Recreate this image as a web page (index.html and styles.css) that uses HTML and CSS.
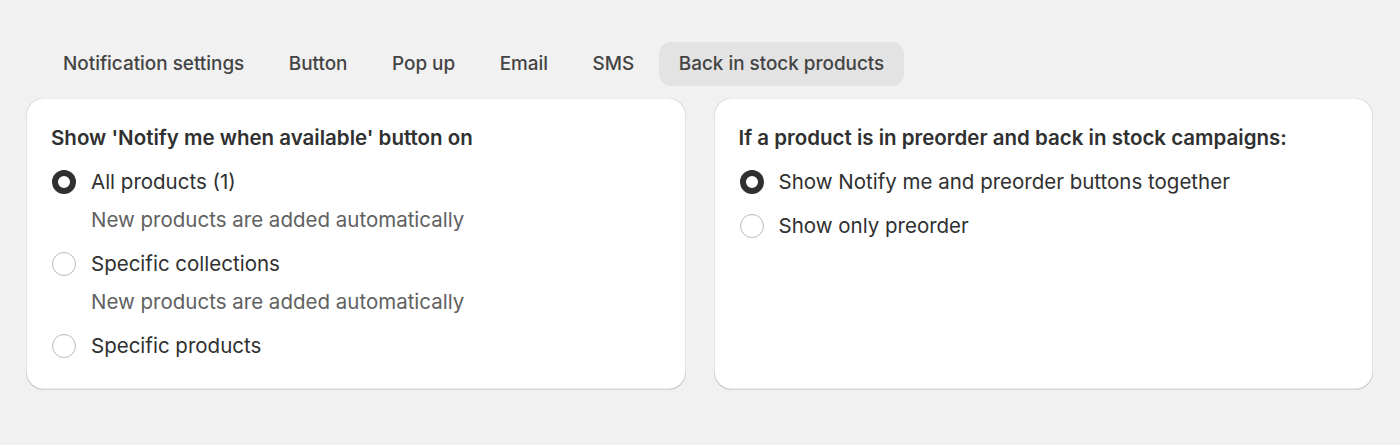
FILE: index.html
```html
<!DOCTYPE html>
<html lang="en">
<head>
<meta charset="utf-8">
<title>Back in stock settings</title>
<link rel="stylesheet" href="styles.css">
</head>
<body>
<div class="page">
  <nav class="tabs">
    <div class="tab">Notification settings</div>
    <div class="tab">Button</div>
    <div class="tab">Pop up</div>
    <div class="tab">Email</div>
    <div class="tab">SMS</div>
    <div class="tab tab-active">Back in stock products</div>
  </nav>
  <div class="cards">
    <section class="card">
      <h2 class="card-title">Show 'Notify me when available' button on</h2>
      <div class="choices">
        <div class="choice">
          <div class="choice-row"><span class="radio radio-checked"></span><span class="label">All products (1)</span></div>
          <div class="help">New products are added automatically</div>
        </div>
        <div class="choice">
          <div class="choice-row"><span class="radio"></span><span class="label">Specific collections</span></div>
          <div class="help">New products are added automatically</div>
        </div>
        <div class="choice">
          <div class="choice-row"><span class="radio"></span><span class="label">Specific products</span></div>
        </div>
      </div>
    </section>
    <section class="card">
      <h2 class="card-title">If a product is in preorder and back in stock campaigns:</h2>
      <div class="choices">
        <div class="choice">
          <div class="choice-row"><span class="radio radio-checked"></span><span class="label">Show Notify me and preorder buttons together</span></div>
        </div>
        <div class="choice">
          <div class="choice-row"><span class="radio"></span><span class="label">Show only preorder</span></div>
        </div>
      </div>
    </section>
  </div>
</div>
</body>
</html>
```
FILE: styles.css
```css
* { box-sizing: border-box; }

html, body {
  margin: 0;
  padding: 0;
}

body {
  background: #f1f1f1;
  font-family: Inter, "Noto Sans", "Liberation Sans", sans-serif;
  color: #303030;
  font-size: 20.5px;
  line-height: 30px;
}

.page {
  padding: 42px 27px 0 26px;
}

.tabs {
  display: flex;
  gap: 4.5px;
  padding-left: 17px;
}

.tab {
  height: 44px;
  line-height: 44px;
  padding: 0 20px;
  border-radius: 12px;
  font-size: 18.9px;
  font-weight: 500;
  color: #444444;
  white-space: nowrap;
}

.tab-active {
  background: #e3e3e3;
}

.cards {
  margin-top: 12px;
  display: grid;
  grid-template-columns: 1fr 1fr;
  gap: 28px;
}

.card {
  background: #ffffff;
  border-radius: 18px;
  height: 292px;
  padding: 24.5px 25px 24px;
  box-shadow:
    inset 1px 0 0 rgba(0, 0, 0, 0.11),
    inset -1px 0 0 rgba(0, 0, 0, 0.11),
    inset 0 1px 0 rgba(0, 0, 0, 0.07),
    inset 0 -1.5px 0 rgba(0, 0, 0, 0.16);
}

.card-title {
  margin: 0;
  font-size: 20.5px;
  line-height: 30px;
  font-weight: 600;
  color: #303030;
}

.choices {
  margin-top: 14px;
  display: flex;
  flex-direction: column;
  gap: 14px;
}

.choice-row {
  display: flex;
  align-items: center;
  height: 30px;
  padding-left: 1px;
  gap: 15px;
}

.radio {
  flex: none;
  width: 24px;
  height: 24px;
  border-radius: 50%;
  border: 1.5px solid #b8b8b8;
  background: #fff;
}

.radio-checked {
  border: 6.5px solid #303030;
}

.help {
  margin-top: 8px;
  padding-left: 40px;
  color: #616161;
}
```
